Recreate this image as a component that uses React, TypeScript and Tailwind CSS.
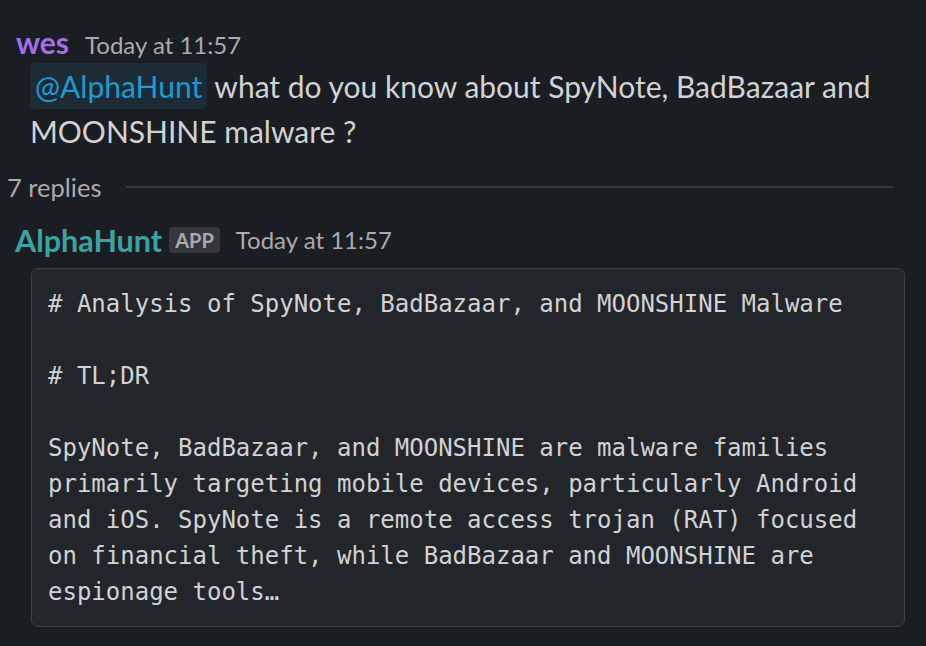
import React from 'react';

const codeLines = [
  '# Analysis of SpyNote, BadBazaar, and MOONSHINE Malware',
  '',
  '# TL;DR',
  '',
  'SpyNote, BadBazaar, and MOONSHINE are malware families',
  'primarily targeting mobile devices, particularly Android',
  'and iOS. SpyNote is a remote access trojan (RAT) focused',
  'on financial theft, while BadBazaar and MOONSHINE are',
  'espionage tools…',
];

export default function App() {
  return (
    <div className="w-[926px] h-[646px] overflow-hidden bg-[#1a1d21] text-[#d1d2d3] font-['Lato',sans-serif]">
      {/* user message */}
      <div className="pt-[26px] pl-[16px]">
        <div className="flex items-baseline gap-[16px] h-[32px]">
          <span className="text-[30px] font-bold text-[#a36fe6] leading-[32px]">wes</span>
          <span className="text-[24px] text-[#ababad] leading-[32px]">Today at 11:57</span>
        </div>
        <div className="pl-[14px] text-[30px] leading-[45px] mt-[6px]">
          <span className="bg-[#1d2b36] text-[#1d9bd1] rounded-[5px] px-[5px] py-[5px]">@AlphaHunt</span>{' '}
          what do you know about SpyNote, BadBazaar and
          <br />
          MOONSHINE malware ?
        </div>
      </div>

      {/* replies divider */}
      <div className="flex items-center pl-[7px] pr-[33px] mt-[18px] h-[30px]">
        <span className="text-[25.5px] text-[#ababad] leading-[30px]">7 replies</span>
        <div className="flex-1 ml-[25px] h-[2px] bg-[#35373b]" />
      </div>

      {/* app reply */}
      <div className="pl-[15px] mt-[23px]">
        <div className="flex items-center h-[30px]">
          <span className="text-[30.5px] font-bold text-[#3aa3a3] leading-[30px]">AlphaHunt</span>
          <span className="ml-[7px] bg-[#35373b] text-[#ababad] text-[20px] font-bold leading-[26px] px-[6px] rounded-[4px]">APP</span>
          <span className="ml-[16px] text-[24px] text-[#ababad] leading-[30px]">Today at 11:57</span>
        </div>
        <div className="mt-[13px] ml-[16px] w-[874px] bg-[#222529] border border-[#3b3e42] rounded-[7px] pl-[16px] pt-[17px] pb-[16px]">
          <pre className="font-['DejaVu_Sans_Mono',monospace] text-[24px] leading-[36px] text-[#d1d2d3] whitespace-pre">
            {codeLines.map((l, i) => (
              <div key={i} className="h-[36px]">{l}</div>
            ))}
          </pre>
        </div>
      </div>
    </div>
  );
}
